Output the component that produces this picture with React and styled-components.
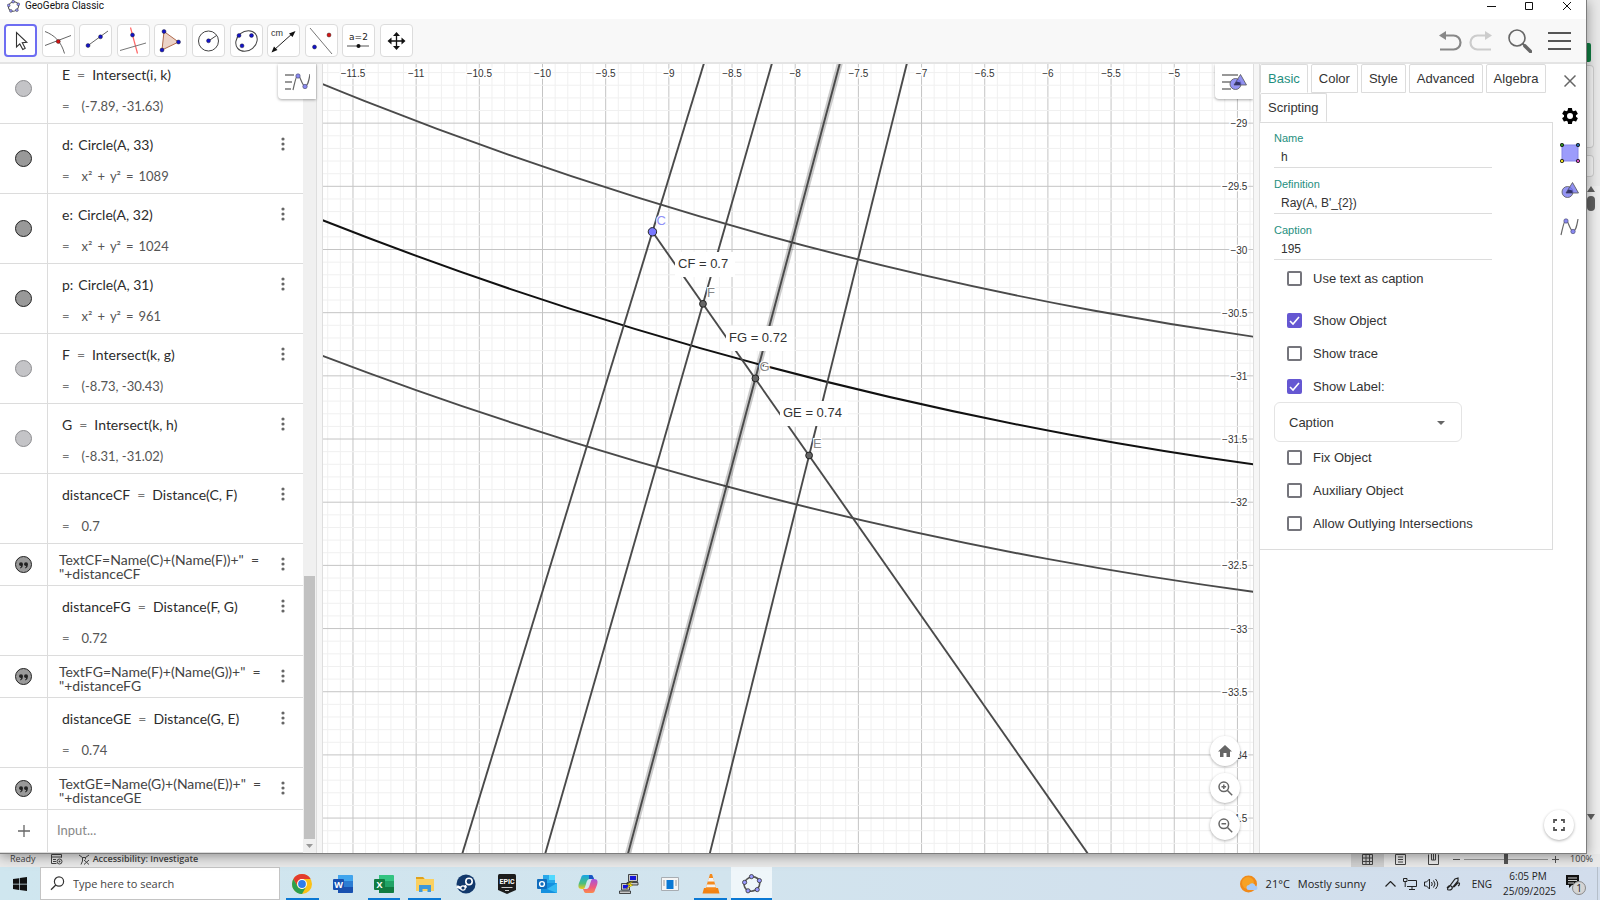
import React from 'react';
import styled, { createGlobalStyle, css } from 'styled-components';

const GlobalStyle = createGlobalStyle`
  * { box-sizing: border-box; }
  body {
    margin: 0;
    overflow: hidden;
    font-family: "Liberation Sans", Arial, sans-serif;
    color: #333;
  }
  button {
    padding: 0;
    border: 0;
    background: none;
    font: inherit;
    color: inherit;
  }
  svg { display: block; }
`;

const segoe = '"Open Sans", "Segoe UI", sans-serif';
const line = '#dcdcdc';

const Screen = styled.div`
  display: flex;
  flex-direction: column;
  height: 100vh;
  background: #e6e6e6;
`;

const Desktop = styled.div`
  display: flex;
  flex: 1;
  min-height: 0;
`;

const Window = styled.div`
  display: flex;
  flex-direction: column;
  flex: 1;
  min-width: 0;
  position: relative;
  z-index: 1;
  background: #fff;
  border-right: 1px solid #7d7d7d;
  border-bottom: 1px solid #7d7d7d;
  box-shadow: 0 2px 12px rgba(0, 0, 0, .4);
`;

/* title bar */

const TitleBar = styled.div`
  display: flex;
  align-items: center;
  height: 19px;
  padding: 0 14px 7px 7px;
  font: 10px/12px Roboto, sans-serif;
  color: #111;
`;

const Title = styled.div`
  flex: 1;
  padding-left: 5px;
`;

const WindowButtons = styled.div`
  display: flex;
  gap: 28px;
`;

/* toolbar */

const Toolbar = styled.div`
  display: flex;
  align-items: center;
  justify-content: space-between;
  height: 45px;
  padding: 0 15px 0 4px;
  background: #f8f8f8;
  border-bottom: 2px solid #e4e4e4;
`;

const Tools = styled.div`
  display: flex;
  justify-content: space-between;
  width: 409px;
`;

const Tool = styled.button`
  display: flex;
  width: 33px;
  height: 33px;
  background: #fff;
  border: 1px solid ${line};
  border-radius: 4px;
  ${props => props.$active && css`
    border: 2px solid #6d6df2;
  `}
  svg {
    margin: auto;
    flex: none;
  }
`;

const Actions = styled.div`
  display: flex;
  align-items: center;
  gap: 7px;
`;

const Action = styled.button`
  margin-left: ${props => (props.$wide ? '9px' : 0)};
`;

const Main = styled.div`
  display: flex;
  flex: 1;
  min-height: 0;
`;

/* algebra view */

const Algebra = styled.div`
  display: flex;
  position: relative;
  width: 316px;
`;

const List = styled.div`
  display: flex;
  flex-direction: column;
  justify-content: flex-end;
  flex: 1;
  overflow: hidden;
`;

const Row = styled.div`
  display: flex;
  flex: none;
  height: ${props => props.$height}px;
  border-bottom: 1px solid ${line};
  font-family: Lato, sans-serif;
  font-size: 14px;
`;

const MarbleCell = styled.div`
  display: flex;
  align-items: center;
  justify-content: center;
  width: 48px;
  border-right: 1px solid ${line};
`;

const Marble = styled.button`
  display: flex;
  align-items: center;
  justify-content: center;
  width: 17px;
  height: 17px;
  border-radius: 50%;
  border: 1px solid ${props => (props.$light ? '#8c8c8f' : '#222')};
  background: ${props => (props.$light ? '#c4c4c7' : '#999')};
`;

const Body = styled.div`
  flex: 1;
  padding: 10px 0 0 14px;
`;

const Definition = styled.div`
  display: flex;
  gap: ${props => (props.$colon ? 5 : 7)}px;
  height: 22px;
  line-height: 22px;
  color: #2c2c2c;
`;

const Value = styled.div`
  display: flex;
  gap: 12px;
  margin-top: 9px;
  height: 22px;
  line-height: 22px;
  font-size: 13px;
  color: #555;
`;

const Equals = styled.span`
  color: #777;
`;

const Equation = styled.span`
  display: flex;
  gap: 5px;
`;

const TextBody = styled.div`
  flex: 1;
  padding: 9px 0 0 11px;
  font-size: 14px;
  line-height: 14px;
  color: #444;
  white-space: pre;
`;

const Dots = styled.button`
  height: 40px;
  width: 16px;
  margin-right: 12px;
  display: flex;
  align-items: center;
  justify-content: center;
`;

const InputBox = styled.input`
  flex: 1;
  min-width: 0;
  padding: 0 0 2px 9px;
  border: 0;
  outline: 0;
  font: 13px Lato, sans-serif;
  &::placeholder { color: #888; }
`;

const Scroll = styled.div`
  display: flex;
  flex-direction: column;
  align-items: center;
  justify-content: flex-end;
  gap: 5px;
  width: 13px;
  padding-bottom: 5px;
  background: #f0f0f0;
`;

const ScrollThumb = styled.div`
  width: 11px;
  height: 263px;
  background: #c1c1c1;
`;

const Splitter = styled.div`
  width: 7px;
  background: #f6f6f6;
  border: solid #dedede;
  border-width: 0 1px;
`;

const StyleBar = styled.button`
  position: absolute;
  top: 0;
  right: 0;
  display: flex;
  align-items: center;
  justify-content: center;
  width: 38px;
  height: 35px;
  background: #fff;
  border-radius: 0 0 0 4px;
  box-shadow: 0 1px 3px rgba(0, 0, 0, .35);
`;

/* graphics view */

const Graphics = styled.div`
  flex: 1;
  min-width: 0;
  position: relative;
  overflow: hidden;
`;

const Plot = styled.svg`
  width: 100%;
  height: 100%;
  text { font-family: "Liberation Sans", Arial, sans-serif; }
`;

const ZoomButtons = styled.div`
  position: absolute;
  right: 13px;
  bottom: 13px;
  display: flex;
  flex-direction: column;
  gap: 7px;
`;

const RoundButton = styled.button`
  display: flex;
  align-items: center;
  justify-content: center;
  width: 30px;
  height: 30px;
  border-radius: 50%;
  background: #fff;
  box-shadow: 0 1px 3px rgba(0, 0, 0, .3);
`;

/* properties view */

const Properties = styled.div`
  display: flex;
  width: 326px;
`;

const PropsBody = styled.div`
  flex: 1;
`;

const Tabs = styled.div`
  display: flex;
  flex-wrap: wrap;
  column-gap: 3px;
`;

const Tab = styled.button`
  height: 29px;
  padding: 0 7px;
  border: 1px solid ${line};
  border-bottom-color: ${props => (props.$open ? 'transparent' : line)};
  border-radius: 2px 2px 0 0;
  font-size: 13px;
  color: ${props => (props.$active ? '#1f8f80' : '#333')};
`;

const Panel = styled.div`
  padding: 0 0 9px 14px;
  border: solid ${line};
  border-width: 0 1px 1px 0;
  box-shadow: inset 0 1px ${line};
`;

const Field = styled.label`
  display: block;
  width: 218px;
  padding-top: 9px;
  border-bottom: 1px solid ${line};
  font-size: 11px;
  line-height: 14px;
  color: #1f8f80;
  input {
    display: block;
    width: 100%;
    height: 22px;
    padding: 1px 7px 0;
    border: 0;
    outline: 0;
    background: none;
    font: 12px "Liberation Sans", Arial, sans-serif;
    color: #333;
  }
`;

const Checks = styled.div`
  padding-top: ${props => props.$top || 0}px;
`;

const CheckLabel = styled.label`
  display: flex;
  align-items: center;
  gap: 11px;
  height: 33px;
  padding-left: 13px;
  font-size: 13px;
`;

const CheckBox = styled.input`
  appearance: none;
  width: 15px;
  height: 15px;
  margin: 0;
  border: 2px solid #75757c;
  border-radius: 2px;
  &:checked {
    border-color: #6557d2;
    background: #6557d2 url("data:image/svg+xml,%3Csvg xmlns='http://www.w3.org/2000/svg' viewBox='0 0 11 11'%3E%3Cpath d='M1 6l3 3 6-7' fill='none' stroke='white' stroke-width='1.6'/%3E%3C/svg%3E");
  }
`;

const SelectWrap = styled.div`
  position: relative;
  width: 188px;
  margin: -1px 0;
  svg {
    position: absolute;
    right: 17px;
    top: 19px;
  }
`;

const Select = styled.select`
  appearance: none;
  width: 100%;
  height: 40px;
  padding: 0 14px;
  border: 1px solid #e4e4e4;
  border-radius: 6px;
  background: #fff;
  font: 13px "Liberation Sans", Arial, sans-serif;
  color: #333;
`;

const SideIcons = styled.div`
  display: flex;
  flex-direction: column;
  align-items: center;
  width: 33px;
  padding-bottom: 13px;
`;

const SideIcon = styled.button`
  display: flex;
  align-items: center;
  justify-content: center;
  width: 33px;
  height: ${props => (props.$first ? 33 : 37)}px;
`;

const Fullscreen = styled(RoundButton)`
  margin: auto 0 0 -22px;
`;

/* what shows of the workbook behind the window */

const Behind = styled.div`
  display: flex;
  flex-direction: column;
  width: 13px;
  padding-top: 43px;
  background: #e9e9e9;
`;

const GreenChip = styled.div`
  width: 4px;
  height: 19px;
  border-radius: 0 2px 2px 0;
  background: #107c41;
`;

const Ribbon = styled.div`
  width: 7px;
  height: ${props => props.$height}px;
  margin-top: ${props => props.$gap}px;
  background: #f4f4f4;
  border: 1px solid #cfcfcf;
  border-left: 0;
  border-radius: 0 4px 4px 0;
`;

const BehindScroll = styled.div`
  display: flex;
  flex-direction: column;
  flex: 1;
  margin-top: 9px;
  padding: 0 0 34px;
  gap: 4px;
  background: #eee;
  svg:last-child { margin-top: auto; }
`;

const BehindThumb = styled.div`
  width: 8px;
  height: 15px;
  border-radius: 4px;
  background: #606060;
`;

const StatusBar = styled.div`
  display: flex;
  align-items: center;
  height: 13px;
  padding: 0 7px 3px 10px;
  background: #e9e9e9;
  font: 9px/10px ${segoe};
  color: #444;
`;

const StatusItem = styled.div`
  display: flex;
  align-items: center;
  gap: 3px;
  margin-left: 15px;
  font-weight: ${props => (props.$strong ? 600 : 400)};
`;

const StatusRight = styled.div`
  display: flex;
  align-items: center;
  margin-left: auto;
`;

const ViewButton = styled.button`
  display: flex;
  align-items: center;
  justify-content: center;
  width: 33px;
  height: 16px;
  background: ${props => (props.$active ? '#cfcfcf' : 'none')};
`;

const ZoomSlider = styled.input`
  appearance: none;
  width: 84px;
  height: 10px;
  margin: 0 4px;
  background: linear-gradient(#999, #999) center / 100% 1px no-repeat;
  &::-webkit-slider-thumb {
    appearance: none;
    width: 4px;
    height: 10px;
    background: #555;
  }
`;

const Percent = styled.span`
  margin-left: 11px;
`;

/* taskbar */

const Taskbar = styled.div`
  display: flex;
  height: 33px;
  background: linear-gradient(90deg, #cfe6ef, #d2e4ee 45%, #d2ddec);
  font-family: ${segoe};
  color: #222;
`;

const Start = styled.button`
  display: flex;
  align-items: center;
  justify-content: center;
  width: 40px;
`;

const SearchBox = styled.label`
  display: flex;
  align-items: center;
  gap: 8px;
  width: 240px;
  padding-left: 9px;
  background: #fff;
  border: 1px solid #c4c4c4;
  input {
    flex: 1;
    min-width: 0;
    padding: 0;
    border: 0;
    outline: 0;
    font: 11px ${segoe};
    &::placeholder { color: #444; }
  }
`;

const Apps = styled.div`
  display: grid;
  grid-template-columns: repeat(12, 1fr);
  width: 490px;
  margin-left: 2px;
`;

const AppButton = styled.button`
  display: flex;
  align-items: center;
  justify-content: center;
  padding-top: ${props => (props.$open || props.$active ? 2 : 0)}px;
  margin: 0 ${props => (props.$active ? 0 : 4)}px;
  background: ${props => (props.$active ? '#eff6fa' : 'none')};
  border-bottom: ${props => (props.$open || props.$active ? '2px solid #0a78d4' : 0)};
`;

const Tray = styled.div`
  display: flex;
  align-items: center;
  margin-left: auto;
  padding-right: 2px;
  font-size: 11px;
`;

const Weather = styled.button`
  display: flex;
  align-items: center;
  gap: 8px;
  margin-right: 19px;
`;

const TrayIcons = styled.div`
  display: flex;
  align-items: center;
  gap: 7px;
`;

const Lang = styled.button`
  margin: 0 11px;
  font-size: 10px;
`;

const Clock = styled.div`
  width: 50px;
  font-size: 10px;
  line-height: 15px;
  text-align: center;
`;

const Notice = styled.button`
  margin-left: 13px;
  padding: 0 11px 0 0;
  height: 33px;
  border-right: 1px solid #b5bfca;
`;

const Dot = ({ x, y, r = 2, c = '#1414c8' }) => (
  <circle cx={x} cy={y} r={r} fill={c} stroke="#111" strokeWidth=".4" />
);

const Svg = ({ w = 29, h = w, children, ...rest }) => (
  <svg width={w} height={h} viewBox={`0 0 ${w} ${h}`} fill="none" aria-hidden="true" {...rest}>{children}</svg>
);

const Logo = ({ size = 13 }) => (
  <svg width={size} height={size} viewBox="0 0 20 20" aria-hidden="true">
    <ellipse cx="10" cy="10" rx="8" ry="7" fill="none" stroke="#555" strokeWidth="1.6" transform="rotate(-25 10 10)" />
    {[[9.5, 2.6], [17.4, 6.6], [15.2, 15.6], [6, 16.8], [2.6, 8.4]].map(([x, y]) => (
      <circle key={x} cx={x} cy={y} r="2.1" fill="#9999ff" stroke="#333" strokeWidth=".8" />
    ))}
  </svg>
);

const tools = [
  ['Move', <path d="M10.5 6.5v14.4l3.3-3 3 5.6 2.4-1.2-2.900-5.500 4.500-.4z" fill="#fff" stroke="#333" strokeWidth="1.1" />],
  ['Intersect', <g><path d="M1 5.5C10 9 17 15 20.5 27.5M1 19.5l26-10" stroke="#666" /><Dot x={14.3} y={15.5} c="#d41414" /></g>],
  ['Line', <g><path d="M7 19.5L27 5" stroke="#666" /><Dot x={7} y={19.5} /><Dot x={19.5} y={10.8} /></g>],
  ['Perpendicular Line', <g><path d="M11.5 1.5l7 26" stroke="#f66" strokeWidth="1.2" /><path d="M1 24.5l26-7.5" stroke="#777" /><Dot x={13.5} y={9} /></g>],
  ['Polygon', <g><path d="M8 5.5L22.5 16 6 24z" fill="#ecd3c8" stroke="#b06a4c" /><Dot x={8} y={5.5} /><Dot x={22.5} y={16} /><Dot x={6} y={24} /></g>],
  ['Circle with Center', <g><circle cx="14.5" cy="15" r="10" stroke="#444" /><path d="M14.5 15l8-5.5" stroke="#444" /><Dot x={14.5} y={14.8} /></g>],
  ['Conic', <g><ellipse cx="14.5" cy="15" rx="11.5" ry="9.5" transform="rotate(-40 14.5 15)" stroke="#444" /><Dot x={7} y={9.5} /><Dot x={19.5} y={9.5} /><Dot x={10} y={19.8} /></g>],
  ['Distance', <g><path d="M5 24L24 7" stroke="#222" /><path d="M2.5 26.5l2.5-6 3.5 3.5zM26.5 5l-6.5 2.5 3.5 3.5z" fill="#111" /><text x="2" y="10" fontSize="9" fill="#333" fontFamily="Liberation Sans">cm</text></g>],
  ['Reflect', <g><path d="M3 2l22 26" stroke="#777" /><Dot x={22} y={9} c="#d41414" /><Dot x={7.5} y={21} /></g>],
  ['Slider', <g><path d="M3 20h22" stroke="#555" /><circle cx="14.5" cy="20" r="2" fill="#111" /><text x="14.5" y="14" fontSize="9" textAnchor="middle" fill="#222" fontFamily="DejaVu Sans">a=2</text></g>],
  ['Move View', <g><path d="M14.5 8v14M8 15h14" stroke="#111" strokeWidth="1.3" /><path d="M14.5 6l3.5 4h-7zM14.5 24l3.5-4h-7zM5.500 15l4-3.500v7zM23.500 15l-4-3.500v7z" fill="#111" /></g>],
];

const rows = [
  { name: 'E', expr: 'Intersect(i, k)', value: '(-7.89, -31.63)', marble: 'light', noMenu: true },
  { name: 'd', colon: true, expr: 'Circle(A, 33)', equation: 'x² + y² = 1089', marble: 'dark' },
  { name: 'e', colon: true, expr: 'Circle(A, 32)', equation: 'x² + y² = 1024', marble: 'dark' },
  { name: 'p', colon: true, expr: 'Circle(A, 31)', equation: 'x² + y² = 961', marble: 'dark' },
  { name: 'F', expr: 'Intersect(k, g)', value: '(-8.73, -30.43)', marble: 'light' },
  { name: 'G', expr: 'Intersect(k, h)', value: '(-8.31, -31.02)', marble: 'light' },
  { name: 'distanceCF', expr: 'Distance(C, F)', value: '0.7' },
  { text: 'TextCF=Name(C)+(Name(F))+"  =\n"+distanceCF' },
  { name: 'distanceFG', expr: 'Distance(F, G)', value: '0.72' },
  { text: 'TextFG=Name(F)+(Name(G))+"  =\n"+distanceFG' },
  { name: 'distanceGE', expr: 'Distance(G, E)', value: '0.74' },
  { text: 'TextGE=Name(G)+(Name(E))+"  =\n"+distanceGE' },
];

const More = () => (
  <Dots aria-label="More">
    <Svg w={4} h={14}><path d="M2 2h0M2 7h0M2 12h0" stroke="#666" strokeWidth="3.2" strokeLinecap="round" /></Svg>
  </Dots>
);

const CurveIcon = () => (
  <g>
    <path d="M1 18C3 10 4 3 6 3s4 11 7 11 4-6 5-12" stroke="#666" strokeWidth="1.2" />
    <circle cx="6" cy="4" r="2.2" fill="#8888f0" stroke="#446" strokeWidth=".6" />
    <circle cx="13" cy="14.5" r="2.2" fill="#8888f0" stroke="#446" strokeWidth=".6" />
  </g>
);

const ShapesIcon = () => (
  <g stroke="#555" strokeWidth=".8">
    <circle cx="6.5" cy="11" r="5.5" fill="#9494f4" />
    <path d="M11.5 1.5l6 10.500H5z" fill="#7676ee" fillOpacity=".8" />
    <path d="M7.5 8.5l4 1v2.500H5z" fill="#33336a" stroke="none" />
  </g>
);

const AlgebraView = () => (
  <Algebra>
    <List>
      {rows.map(row => (row.text ? (
        <Row key={row.text} $height={42}>
          <MarbleCell>
            <Marble aria-label="Show text">
              <Svg w={11} h={8}><path d="M1 3.2a2 2 0 1 1 4 0Q5 6.5 2.5 7.5L2 6.8Q3.2 6 3.2 5A2 2 0 0 1 1 3.2M6 3.2a2 2 0 1 1 4 0Q10 6.5 7.5 7.5L7 6.8Q8.2 6 8.2 5A2 2 0 0 1 6 3.2" fill="#222" /></Svg>
            </Marble>
          </MarbleCell>
          <TextBody>{row.text}</TextBody>
          <More />
        </Row>
      ) : (
        <Row key={row.name} $height={70}>
          <MarbleCell>
            {row.marble && <Marble $light={row.marble === 'light'} aria-label="Show object" />}
          </MarbleCell>
          <Body>
            <Definition $colon={row.colon}>
              <span>{row.name}{row.colon && ':'}</span>
              {!row.colon && <Equals>=</Equals>}
              <span>{row.expr}</span>
            </Definition>
            <Value>
              <Equals>=</Equals>
              {row.equation
                ? <Equation>{row.equation.split(' ').map(term => <span key={term}>{term}</span>)}</Equation>
                : <span>{row.value}</span>}
            </Value>
          </Body>
          {!row.noMenu && <More />}
        </Row>
      )))}
      <Row $height={43}>
        <MarbleCell>
          <Svg w={12}><path d="M6 0v12M0 6h12" stroke="#666" strokeWidth="1.3" /></Svg>
        </MarbleCell>
        <InputBox placeholder="Input..." aria-label="Input" />
      </Row>
    </List>
    <Scroll>
      <ScrollThumb />
      <Svg w={7} h={4}><path d="M0 0h7L3.5 4z" fill="#999" /></Svg>
    </Scroll>
    <StyleBar aria-label="Algebra style bar">
      <Svg w={26} h={19}>
        <path d="M1 3h9M1 10h7M1 17h6" stroke="#777" strokeWidth="1.6" />
        <g transform="translate(8 0)"><CurveIcon /></g>
      </Svg>
    </StyleBar>
  </Algebra>
);

// pixels per unit, and where the origin falls inside the graphics view
const UNIT = 126.35;
const OX = 1483;
const OY = -3605;
const px = x => OX + x * UNIT;
const py = y => OY - y * UNIT;

const range = (from, count, step) => Array.from({ length: count }, (_, i) => from + i * step);
const minus = n => String(n).replace('-', '−');

const points = {
  C: [-9.13, -29.86],
  F: [-8.73, -30.43],
  G: [-8.315, -31.02],
  E: [-7.89, -31.63],
};

const Ray = ({ to: [x, y], ...rest }) => (
  <line x1={OX} y1={OY} x2={px(x * 1.3)} y2={py(y * 1.3)} stroke="#4a4a4a" strokeWidth="1.9" {...rest} />
);

const GraphicsView = () => (
  <Graphics>
    <Plot role="img" aria-label="Graphics view">
      {range(-118, 76, 1).map(n => (
        <line key={n} x1={px(n / 10)} x2={px(n / 10)} y1="0" y2="100%" stroke={n % 5 ? '#f0f0f0' : '#c4c4c4'} />
      ))}
      {range(-350, 66, 1).map(n => (
        <line key={n} x1="0" x2="100%" y1={py(n / 10)} y2={py(n / 10)} stroke={n % 5 ? '#f0f0f0' : '#c4c4c4'} />
      ))}
      {range(-11.5, 14, 0.5).map(n => (
        <text key={n} x={px(n)} y="13" fontSize="10" textAnchor="middle" fill="#333" stroke="#fff" strokeWidth="3" paintOrder="stroke">{minus(n)}</text>
      ))}
      {range(-34.5, 12, 0.5).map(n => (
        <text key={n} x={px(-4.5) + 10} y={py(n) + 4} fontSize="10" textAnchor="end" fill="#333" stroke="#fff" strokeWidth="3" paintOrder="stroke">{minus(n)}</text>
      ))}
      <circle cx={OX} cy={OY} r={33 * UNIT} fill="none" stroke="#4a4a4a" strokeWidth="1.9" />
      <circle cx={OX} cy={OY} r={32 * UNIT} fill="none" stroke="#111" strokeWidth="2" />
      <circle cx={OX} cy={OY} r={31 * UNIT} fill="none" stroke="#4a4a4a" strokeWidth="1.9" />
      <Ray to={points.G} stroke="#000" strokeOpacity=".2" strokeWidth="6" />
      {Object.keys(points).map(k => <Ray key={k} to={points[k]} />)}
      <line x1={px(-9.13)} y1={py(-29.86)} x2={px(-5.37)} y2={py(-35.23)} stroke="#4a4a4a" strokeWidth="1.9" />
      {[
        ['CF = 0.7', 355, 204, 60],
        ['FG = 0.72', 406, 278, 68],
        ['GE = 0.74', 460, 353, 68],
      ].map(([label, x, y, w]) => (
        <g key={label}>
          <rect x={x - 3} y={y - 16} width={w} height="25" fill="#fff" />
          <text x={x} y={y} fontSize="13" fill="#333">{label}</text>
        </g>
      ))}
      {Object.entries(points).map(([k, [x, y]]) => (
        <g key={k}>
          <circle cx={px(x)} cy={py(y)} r={k === 'C' ? 4.2 : 3.4} fill={k === 'C' ? '#7878ff' : '#666'} stroke="#222" />
          <text x={px(x) + 4} y={py(y) - 7} fontSize="13" fill={k === 'C' ? '#9090f8' : '#888'} stroke="#fff" strokeWidth="2" paintOrder="stroke">{k}</text>
        </g>
      ))}
    </Plot>
    <StyleBar aria-label="Graphics style bar">
      <Svg w={26} h={19}>
        <path d="M1 3h16M1 10h9M1 17h9" stroke="#777" strokeWidth="1.6" />
        <g transform="translate(8 1)"><ShapesIcon /></g>
      </Svg>
    </StyleBar>
    <ZoomButtons>
      <RoundButton aria-label="Standard view">
        <Svg w={14} h={12}><path d="M7 0l7 6.5h-2V12H8.5V8h-3v4H2V6.5H0z" fill="#666" /></Svg>
      </RoundButton>
      <RoundButton aria-label="Zoom in">
        <Svg w={15}><path d="M9.5 9.5l4.7 4.7M3.5 5.8h4.6M5.8 3.5v4.6" stroke="#666" strokeWidth="1.5" /><circle cx="5.8" cy="5.8" r="4.8" stroke="#666" strokeWidth="1.5" /></Svg>
      </RoundButton>
      <RoundButton aria-label="Zoom out">
        <Svg w={15}><path d="M9.5 9.5l4.7 4.7M3.5 5.8h4.6" stroke="#666" strokeWidth="1.5" /><circle cx="5.8" cy="5.8" r="4.8" stroke="#666" strokeWidth="1.5" /></Svg>
      </RoundButton>
    </ZoomButtons>
  </Graphics>
);

const Check = ({ label, checked }) => (
  <CheckLabel>
    <CheckBox type="checkbox" defaultChecked={checked} />
    {label}
  </CheckLabel>
);

const PropertiesView = () => (
  <Properties>
    <PropsBody>
      <Tabs>
        {['Basic', 'Color', 'Style', 'Advanced', 'Algebra', 'Scripting'].map((tab, i) => (
          <Tab key={tab} $active={i === 0} $open={i === 0 || i === 5}>{tab}</Tab>
        ))}
      </Tabs>
      <Panel>
        <Field>Name<input defaultValue="h" /></Field>
        <Field>Definition<input defaultValue="Ray(A, B'_{2})" /></Field>
        <Field>Caption<input defaultValue="195" /></Field>
        <Checks $top={2}>
          <Check label="Use text as caption" />
        </Checks>
        <Checks $top={9}>
          <Check label="Show Object" checked />
          <Check label="Show trace" />
          <Check label="Show Label:" checked />
        </Checks>
        <SelectWrap>
          <Select aria-label="Label style" defaultValue="Caption">
            <option>Caption</option>
          </Select>
          <Svg w={8} h={4}><path d="M0 0h8L4 4z" fill="#666" /></Svg>
        </SelectWrap>
        <Checks>
          <Check label="Fix Object" />
          <Check label="Auxiliary Object" />
          <Check label="Allow Outlying Intersections" />
        </Checks>
      </Panel>
    </PropsBody>
    <SideIcons>
      <SideIcon $first aria-label="Close">
        <Svg w={12}><path d="M.5.5l11 11M11.5.5l-11 11" stroke="#666" strokeWidth="1.5" /></Svg>
      </SideIcon>
      <SideIcon aria-label="Settings">
        <svg width="20" height="20" viewBox="0 0 24 24" aria-hidden="true">
          <path fill="#000" d="M19.140 12.940c.04-.3.06-.61.06-.94 0-.32-.02-.64-.07-.94l2.030-1.580a.49.49 0 0 0 .12-.61l-1.920-3.320a.49.49 0 0 0-.59-.22l-2.390.96a7 7 0 0 0-1.620-.94l-.36-2.540a.48.48 0 0 0-.48-.41h-3.840a.47.47 0 0 0-.47.41l-.36 2.540a7.400 7.400 0 0 0-1.620.94l-2.390-.96a.48.48 0 0 0-.59.22L2.740 8.870a.47.47 0 0 0 .12.61l2.030 1.580c-.05.3-.09.63-.09.94s.02.64.07.94l-2.030 1.580a.49.49 0 0 0-.12.61l1.920 3.320c.12.22.37.29.59.22l2.390-.96c.5.38 1.030.7 1.620.94l.36 2.540c.05.24.24.41.48.41h3.840c.24 0 .44-.17.47-.41l.36-2.540a7 7 0 0 0 1.620-.94l2.390.96c.22.08.47 0 .59-.22l1.920-3.320a.47.47 0 0 0-.12-.61zM12 15.600A3.600 3.600 0 1 1 12 8.400a3.600 3.600 0 0 1 0 7.200z" />
        </svg>
      </SideIcon>
      <SideIcon aria-label="Object">
        <Svg w={20}>
          <path d="M2 2h16v16H2z" fill="#9c9cfb" stroke="#8585e6" />
          <g stroke="#111" strokeWidth=".8">
            <circle cx="2" cy="2" r="1.7" fill="#2a8a1c" />
            <circle cx="18" cy="2" r="1.7" fill="#1d63a8" />
            <circle cx="2" cy="18" r="1.7" fill="#e6d81e" />
            <circle cx="18" cy="18" r="1.7" fill="#d44fc0" />
          </g>
        </Svg>
      </SideIcon>
      <SideIcon aria-label="Graphics">
        <Svg w={18}><ShapesIcon /></Svg>
      </SideIcon>
      <SideIcon aria-label="Algebra">
        <Svg w={19}><CurveIcon /></Svg>
      </SideIcon>
      <Fullscreen aria-label="Full screen">
        <Svg w={12}><path d="M1 4V1h3M8 1h3v3M11 8v3H8M4 11H1V8" stroke="#555" strokeWidth="1.8" /></Svg>
      </Fullscreen>
    </SideIcons>
  </Properties>
);

const Office = ({ letter, dark, mid, light }) => (
  <Svg w={20} h={18}>
    <rect x="5" width="15" height="18" rx="1.5" fill={mid} />
    <path d="M5 0h13.5A1.5 1.5 0 0 1 20 1.5V6H5z" fill={light} />
    <path d="M5 12h15v4.5a1.5 1.5 0 0 1-1.5 1.5H5z" fill={dark} />
    <rect y="4" width="11" height="11" rx="1" fill={dark} />
    <text x="5.5" y="13" fontSize="9" fontWeight="700" textAnchor="middle" fill="#fff" fontFamily="Open Sans">{letter}</text>
  </Svg>
);

const apps = [
  { name: 'Chrome', open: true, icon: (
    <Svg w={20}>
      <circle cx="10" cy="10" r="10" fill="#fbc116" />
      <path d="M1.34 5A10 10 0 0 1 18.66 5H10a5 5 0 0 0-4.330 7.500z" fill="#e33b2e" />
      <path d="M1.340 5A10 10 0 0 0 10 20l4.330-7.500a5 5 0 0 1-8.660 0z" fill="#2da04d" />
      <circle cx="10" cy="10" r="4.9" fill="#fff" />
      <circle cx="10" cy="10" r="3.9" fill="#2f7de9" />
    </Svg>
  ) },
  { name: 'Word', icon: <Office letter="W" dark="#1850b0" mid="#2b7cd3" light="#41a5ee" /> },
  { name: 'Excel', open: true, icon: <Office letter="X" dark="#107c41" mid="#21a366" light="#33c481" /> },
  { name: 'File Explorer', open: true, icon: (
    <Svg w={18} h={16}>
      <path d="M0 1h7l2 2h9v12H0z" fill="#fbd05f" />
      <path d="M0 1h7l1.5 2H0z" fill="#e0a21c" />
      <path d="M3 16V9h12v7h-3.5v-3h-5v3z" fill="#3f98d8" />
    </Svg>
  ) },
  { name: 'Steam', icon: (
    <Svg w={20}>
      <circle cx="10" cy="10" r="9.5" fill="#12386b" />
      <path d="M1 12.5l5 2 4.5-2.5" stroke="#fff" strokeWidth="2.6" />
      <circle cx="13" cy="7.5" r="3.2" fill="#12386b" stroke="#fff" strokeWidth="1.6" />
      <circle cx="7" cy="14" r="2.2" fill="#12386b" stroke="#fff" strokeWidth="1.2" />
    </Svg>
  ) },
  { name: 'Epic Games', icon: (
    <Svg w={18} h={20}>
      <path d="M0 1.500Q0 0 1.500 0h15Q18 0 18 1.500V16l-9 4-9-4z" fill="#1c1c1c" />
      <text x="9" y="10" fontSize="7" fontWeight="700" textAnchor="middle" fill="#fff" fontFamily="Roboto">EPIC</text>
      <path d="M3.5 13.5h11M7 16.5h4" stroke="#ccc" />
    </Svg>
  ) },
  { name: 'Outlook', icon: (
    <Svg w={20} h={18}>
      <path d="M6 0h12v10H6z" fill="#28a8ea" />
      <path d="M12 0h6v5h-6z" fill="#50d9ff" />
      <path d="M4 8h16v10H4z" fill="#1490df" />
      <path d="M20 8l-10 6 10 4z" fill="#35b8f1" />
      <rect y="4" width="10" height="10" rx="1" fill="#0f6cbd" />
      <circle cx="5" cy="9" r="2.4" stroke="#fff" strokeWidth="1.4" />
    </Svg>
  ) },
  { name: 'Copilot', icon: (
    <Svg w={20}>
      <defs>
        <linearGradient id="cpa" x1="0" y1="0" x2="0" y2="1"><stop stopColor="#17a5e8" /><stop offset=".6" stopColor="#4bbf7c" /><stop offset="1" stopColor="#f3c818" /></linearGradient>
        <linearGradient id="cpb" x1="0" y1="0" x2="0" y2="1"><stop stopColor="#a352e0" /><stop offset=".6" stopColor="#ef5a7e" /><stop offset="1" stopColor="#fb8b4a" /></linearGradient>
      </defs>
      <path d="M6 1h7c2 0 2 2 3 4h-4c-2 0-3 1-4 5l-1 3c-.5 1.5-1 2-3 2C0 15 0 12 1 9l2-5c.5-2 1-3 3-3z" fill="url(#cpa)" />
      <path d="M11 1h2c2 0 2 2 3 4h-5z" fill="#1b54c4" />
      <path d="M14 19H8c-2 0-2-2-3-4h3c2 0 3-1 4-5l1-3c.5-1.5 1-2 3-2 4 0 4 3 3 6l-2 5c-.5 2-1 3-3 3z" fill="url(#cpb)" />
    </Svg>
  ) },
  { name: 'PuTTY', icon: (
    <Svg w={20}>
      <g fill="#c8c8c8" stroke="#222" strokeWidth=".8">
        <path d="M9.5.5h9v7h-9zM8 8.5h11v2.5H8zM2.5 9.5h8v6.500h-8zM.5 17h11v2.500H.5z" />
      </g>
      <path d="M11 2h6v4h-6zM4 11h5v3.5H4z" fill="#1414d8" />
      <path d="M14 7l-6 3.5 3 .5-4 4 7-4-3-1z" fill="#ffee12" stroke="#776600" strokeWidth=".4" />
    </Svg>
  ) },
  { name: 'Viewer', icon: (
    <Svg w={18} h={14}>
      <path d="M.5.5h17v13H.5z" fill="#f5f5f5" stroke="#a8adb2" />
      <path d="M5.5 3h7v9h-7z" fill="#0a78d4" />
      <path d="M2 4h2M2 6h2M2 8h2M14 4h2M14 6h2M14 8h2" stroke="#999" />
    </Svg>
  ) },
  { name: 'VLC', open: true, icon: (
    <Svg w={18} h={20}>
      <path d="M2 14h14l1.5 5.500H.5z" fill="#f28213" />
      <path d="M8 0h2l4.500 15q-5.500 3-11 0z" fill="#f58a1c" />
      <path d="M6.800 4h4.400l1 3.500H5.800zM4.900 10.500h8.200l.9 2.800H4z" fill="#f3f3f3" />
    </Svg>
  ) },
  { name: 'GeoGebra', active: true, icon: <Logo size={20} /> },
];

const GeoGebra = () => (
  <Window>
    <TitleBar>
      <Logo />
      <Title>GeoGebra Classic</Title>
      <WindowButtons>
        <button aria-label="Minimize"><Svg w={10}><path d="M1 5.5h9" stroke="#111" /></Svg></button>
        <button aria-label="Maximize"><Svg w={10}><path d="M1.5 1.500h7v7h-7z" stroke="#111" /></Svg></button>
        <button aria-label="Close window"><Svg w={10}><path d="M1 1l8 8M9 1L1 9" stroke="#111" /></Svg></button>
      </WindowButtons>
    </TitleBar>
    <Toolbar>
      <Tools>
        {tools.map(([name, icon], i) => (
          <Tool key={name} $active={i === 0} aria-label={name}><Svg>{icon}</Svg></Tool>
        ))}
      </Tools>
      <Actions>
        <Action aria-label="Undo">
          <Svg w={23} h={20}><path d="M6 4.5h8.500a7 7 0 0 1 0 14H1" stroke="#888" strokeWidth="2.2" /><path d="M7 0v9L0 4.500z" fill="#888" /></Svg>
        </Action>
        <Action aria-label="Redo">
          <Svg w={23} h={20}><path d="M17 4.5H8.500a7 7 0 0 0 0 14H22" stroke="#ccc" strokeWidth="2.2" /><path d="M16 0v9l7-4.500z" fill="#ccc" /></Svg>
        </Action>
        <Action $wide aria-label="Search">
          <Svg w={24}><circle cx="9" cy="9" r="8" stroke="#666" strokeWidth="1.6" /><path d="M14.5 14.5l3 3" stroke="#666" strokeWidth="2" /><path d="M17 17l5.500 5.500" stroke="#666" strokeWidth="3.6" strokeLinecap="round" /></Svg>
        </Action>
        <Action $wide aria-label="Menu">
          <Svg w={23} h={20}><path d="M0 2h23M0 10h23M0 18h23" stroke="#555" strokeWidth="2.2" /></Svg>
        </Action>
      </Actions>
    </Toolbar>
    <Main>
      <AlgebraView />
      <Splitter />
      <GraphicsView />
      <Splitter />
      <PropertiesView />
    </Main>
  </Window>
);

const App = () => (
  <Screen>
    <GlobalStyle />
    <Desktop>
      <GeoGebra />
      <Behind>
        <GreenChip />
        <Ribbon $height={83} $gap={3} />
        <Ribbon $height={22} $gap={7} />
        <BehindScroll>
          <Svg w={8} h={6}><path d="M4 0l4 6H0z" fill="#606060" /></Svg>
          <BehindThumb />
          <Svg w={8} h={6}><path d="M0 0h8L4 6z" fill="#606060" /></Svg>
        </BehindScroll>
      </Behind>
    </Desktop>
    <StatusBar>
      Ready
      <StatusItem>
        <Svg w={12} h={11}><path d="M.5.5h10v3M.5.5v9h5M0 3h11M2 5.500h3M2 7.500h3" stroke="#444" /><circle cx="8.5" cy="7.5" r="2.5" stroke="#444" /><circle cx="8.5" cy="7.5" r="1" fill="#444" /></Svg>
      </StatusItem>
      <StatusItem $strong>
        <Svg w={12} h={11}><path d="M1 1l3.500 2.500h3L11 1M4.500 3.500V7L3 10.500M7.500 3.500v2M6 6l5 4.500M11 6l-5 4.500" stroke="#444" /></Svg>
        Accessibility: Investigate
      </StatusItem>
      <StatusRight>
        <ViewButton $active aria-label="Normal"><Svg w={11}><path d="M.5.5h10v10H.5zM4 0v11M7.500 0v11M0 4h11M0 7.500h11" stroke="#444" /></Svg></ViewButton>
        <ViewButton aria-label="Page layout"><Svg w={11}><path d="M.5.5h10v10H.5zM3 3h5M3 5.500h5M3 8h5" stroke="#444" /></Svg></ViewButton>
        <ViewButton aria-label="Page break"><Svg w={11}><path d="M.5.5v10h10V.5M3.500 0v6h4V0M5.500 0v6" stroke="#444" /></Svg></ViewButton>
        <Svg w={10} h={7}><path d="M3 3.5h7" stroke="#555" /></Svg>
        <ZoomSlider type="range" aria-label="Zoom" />
        <Svg w={7}><path d="M0 3.5h7M3.500 0v7" stroke="#555" /></Svg>
        <Percent>100%</Percent>
      </StatusRight>
    </StatusBar>
    <Taskbar>
      <Start aria-label="Start">
        <Svg w={14}><path d="M0 2l6-.8v5.500H0zM6.700 1L14 0v6.700H6.700zM0 7.400h6v5.500L0 12zM6.700 7.400H14V14l-7.300-1z" fill="#111" /></Svg>
      </Start>
      <SearchBox>
        <Svg w={15}><circle cx="9" cy="5.5" r="4.6" stroke="#333" strokeWidth="1.2" /><path d="M5.800 9L1 13.800" stroke="#333" strokeWidth="1.3" /></Svg>
        <input placeholder="Type here to search" aria-label="Type here to search" />
      </SearchBox>
      <Apps>
        {apps.map(app => (
          <AppButton key={app.name} $open={app.open} $active={app.active} aria-label={app.name}>{app.icon}</AppButton>
        ))}
      </Apps>
      <Tray>
        <Weather>
          <Svg w={18}><circle cx="8.5" cy="9" r="8.5" fill="#f08a1a" /><circle cx="8" cy="8" r="6" fill="#f7a224" /><path d="M9 15a2.500 2.500 0 0 1 0-5 3.500 3.500 0 0 1 6.500 1 2 2 0 0 1 0 4z" fill="#a8cbf8" /></Svg>
          <span>21°C</span>
          <span>Mostly sunny</span>
        </Weather>
        <TrayIcons>
          <Svg w={11} h={6}><path d="M.5 5.500l5-5 5 5" stroke="#222" strokeWidth="1.2" /></Svg>
          <Svg w={14} h={12}><path d="M5 2.500h8.500v6H4M9 8.500v2.500M6 11.500h6M.5.5h3.500v3H.5zM2.200 3.500V9" stroke="#222" /></Svg>
          <Svg w={15} h={12}><path d="M.5 4h2L5.500 1v10l-3-3h-2zM7.500 4q1.500 2 0 4M9.500 2.500q3 3.500 0 7M11.500 1q4.500 5 0 10" stroke="#222" /></Svg>
          <Svg w={15} h={14}><path d="M1 11c2-3 4-3 5-1s-1 3-3 3-2-2 0-3L9 2l3-1v3L7 10c2 0 3-3 5-4s2 2 0 3" stroke="#222" strokeWidth="1.2" /></Svg>
        </TrayIcons>
        <Lang>ENG</Lang>
        <Clock>6:05 PM 25/09/2025</Clock>
        <Notice aria-label="Notifications">
          <Svg w={20} h={22}>
            <path d="M0 2h13v10H6l-3 3v-3H0z" fill="#111" />
            <path d="M2 5h9M2 7.500h9M2 10h6" stroke="#fff" strokeWidth=".8" />
            <circle cx="13" cy="15" r="6.5" fill="#d4d4d4" stroke="#888" />
            <text x="13" y="19" fontSize="10" textAnchor="middle" fill="#222" fontFamily="Open Sans">1</text>
          </Svg>
        </Notice>
      </Tray>
    </Taskbar>
  </Screen>
);

export default App;
